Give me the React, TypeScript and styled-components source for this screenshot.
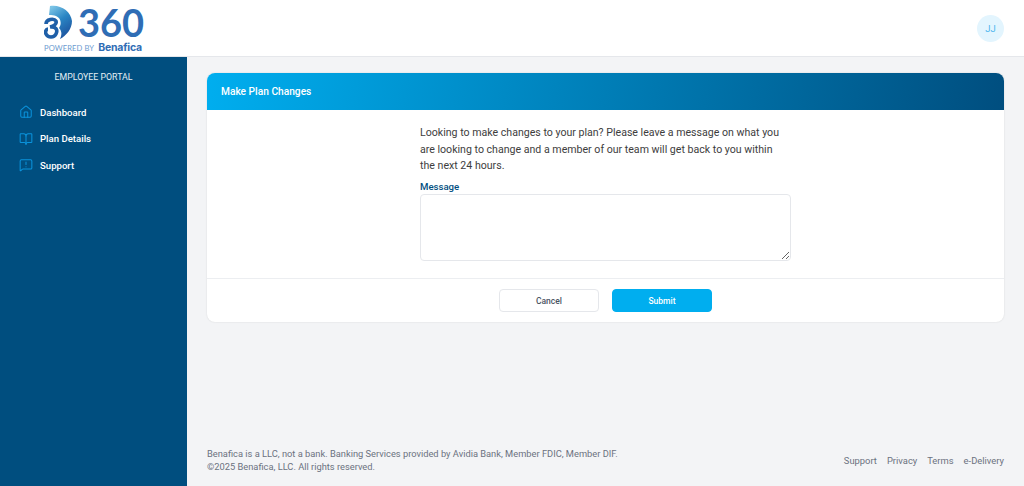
import { createGlobalStyle } from "styled-components";
import styled from "styled-components";
import { House, BookOpen, MessageSquareWarning } from "lucide-react";

const Global = createGlobalStyle`
  * { box-sizing: border-box; }
  html, body { margin: 0; height: 100%; }
  body { font-family: Roboto, "Open Sans", sans-serif; background: #f3f4f6; }
  #root { height: 100%; }
`;

const Page = styled.div`
  height: 486px;
  display: flex;
  flex-direction: column;
  overflow: hidden;
`;

const Header = styled.header`
  height: 57px;
  flex: none;
  background: #fff;
  border-bottom: 1px solid #e5e7eb;
  display: flex;
  align-items: center;
  justify-content: space-between;
  padding: 0 20px 0 44px;
`;

const Logo = styled.div`
  display: flex;
  flex-direction: column;
  height: 56px;
  padding-top: 4px;
`;

const LogoTop = styled.div`
  display: flex;
  align-items: center;
  gap: 6px;
  height: 37px;
`;

const LogoNumber = styled.span`
  font-family: Lato, sans-serif;
  font-size: 38px;
  font-weight: 700;
  line-height: 37px;
  color: #2f6db5;
`;

const LogoTag = styled.div`
  display: flex;
  align-items: baseline;
  gap: 4px;
  white-space: nowrap;
`;

const Powered = styled.span`
  font-family: Lato, sans-serif;
  font-size: 7.6px;
  letter-spacing: 0.1px;
  color: #6d9bd0;
`;

const Brand = styled.span`
  font-family: Inter, sans-serif;
  font-size: 10.5px;
  font-weight: 700;
  letter-spacing: -0.2px;
  color: #2f6db5;
`;

const Avatar = styled.div`
  width: 27px;
  height: 27px;
  border-radius: 50%;
  background: #e3f5fe;
  color: #4fb6ee;
  font-size: 9.5px;
  display: flex;
  align-items: center;
  justify-content: center;
`;

const Body = styled.div`
  flex: 1;
  display: flex;
  min-height: 0;
`;

const Sidebar = styled.aside`
  width: 187px;
  flex: none;
  background: #004e7f;
`;

const PortalTitle = styled.div`
  padding-top: 13px;
  text-align: center;
  color: #e4eef5;
  font-size: 8.8px;
  line-height: 14px;
  margin-bottom: 20px;
`;

const Nav = styled.nav`
  display: flex;
  flex-direction: column;
  gap: 10px;
  padding-left: 19px;
`;

const NavItem = styled.a`
  display: flex;
  align-items: center;
  gap: 7px;
  height: 16.5px;
  color: #fff;
  font-size: 9.6px;
  font-weight: 500;
`;

const Main = styled.main`
  flex: 1;
  display: flex;
  flex-direction: column;
  justify-content: space-between;
  padding: 16px 20px 13px;
`;

const Card = styled.section`
  background: #fff;
  border-radius: 8px;
  box-shadow: 0 0 2px rgba(0, 0, 0, 0.12);
  overflow: hidden;
`;

const CardHeader = styled.div`
  height: 37px;
  padding: 0 14px;
  display: flex;
  align-items: center;
  color: #fff;
  font-size: 10.2px;
  font-weight: 500;
  background: linear-gradient(100deg, #00aeef 0%, #004e7f 100%);
`;

const CardBody = styled.div`
  height: 169px;
  padding: 15px 0 0 213px;
  border-bottom: 1px solid #eceef1;
`;

const Intro = styled.p`
  margin: 0 0 5px;
  width: 364px;
  color: #3d3d3d;
  font-size: 10.6px;
  line-height: 16.5px;
`;

const Label = styled.label`
  display: block;
  color: #004e7f;
  font-size: 9.6px;
  font-weight: 500;
  line-height: 13px;
  margin-bottom: 1px;
`;

const Message = styled.textarea`
  display: block;
  width: 371px;
  height: 67px;
  border: 1px solid #e5e7eb;
  border-radius: 4px;
  outline: none;
  background: #fff;
`;

const CardFooter = styled.div`
  height: 43px;
  display: flex;
  justify-content: center;
  align-items: flex-start;
  gap: 13px;
  padding-top: 10px;
`;

const Button = styled.button<{ $primary?: boolean }>`
  width: 100px;
  height: 23px;
  border-radius: 4px;
  border: 1px solid ${({ $primary }) => ($primary ? "#00aeef" : "#e5e7eb")};
  background: ${({ $primary }) => ($primary ? "#00aeef" : "#fff")};
  color: ${({ $primary }) => ($primary ? "#fff" : "#4b5563")};
  font-family: inherit;
  font-size: 8.5px;
  font-weight: 500;
  padding: 0;
`;

const Footer = styled.footer`
  display: flex;
  justify-content: space-between;
  align-items: center;
  color: #6b7280;
  font-size: 9.3px;
  line-height: 13px;
`;

const FooterLinks = styled.div`
  display: flex;
  gap: 10px;
  font-size: 9.4px;
`;

const LogoMark = () => (
  <svg width="28" height="35" viewBox="0 0 28 35">
    <defs>
      <linearGradient id="markFill" x1="0.2" y1="0" x2="0.7" y2="1">
        <stop offset="0" stopColor="#7cc4e6" />
        <stop offset="0.45" stopColor="#2a86c4" />
        <stop offset="1" stopColor="#1c4f9c" />
      </linearGradient>
    </defs>
    <path
      d="M6 1 C16 -1 27 6 28 16 C28 24 22 31 16 34 C18 30 18 26 15 23 C18 19 17 13 12 11 C10 10 8 10 5 10 Z"
      fill="url(#markFill)"
    />
    <path
      d="M2 19 C2 14 10 13 12 16 C13 19 10 21 6 22 C12 21 14 25 12 29 C10 33 4 33 2 29 C1 27 2 24 4 24"
      fill="none"
      stroke="#1f5fa8"
      strokeWidth="3.6"
    />
  </svg>
);

const links = ["Support", "Privacy", "Terms", "e-Delivery"];

const navItems = [
  { label: "Dashboard", Icon: House },
  { label: "Plan Details", Icon: BookOpen },
  { label: "Support", Icon: MessageSquareWarning },
];

export default function App() {
  return (
    <Page>
      <Global />
      <Header>
        <Logo>
          <LogoTop>
            <LogoMark />
            <LogoNumber>360</LogoNumber>
          </LogoTop>
          <LogoTag>
            <Powered>POWERED BY</Powered>
            <Brand>Benafica</Brand>
          </LogoTag>
        </Logo>
        <Avatar>JJ</Avatar>
      </Header>
      <Body>
        <Sidebar>
          <PortalTitle>EMPLOYEE PORTAL</PortalTitle>
          <Nav>
            {navItems.map(({ label, Icon }) => (
              <NavItem key={label}>
                <Icon size={14} color="#0a93dc" strokeWidth={1.75} />
                {label}
              </NavItem>
            ))}
          </Nav>
        </Sidebar>
        <Main>
          <Card>
            <CardHeader>Make Plan Changes</CardHeader>
            <CardBody>
              <Intro>
                Looking to make changes to your plan? Please leave a message on what you are
                looking to change and a member of our team will get back to you within the next
                24 hours.
              </Intro>
              <Label>Message</Label>
              <Message />
            </CardBody>
            <CardFooter>
              <Button>Cancel</Button>
              <Button $primary>Submit</Button>
            </CardFooter>
          </Card>
          <Footer>
            <div>
              Benafica is a LLC, not a bank. Banking Services provided by Avidia Bank, Member FDIC, Member DIF.
              <br />
              ©2025 Benafica, LLC. All rights reserved.
            </div>
            <FooterLinks>
              {links.map((l) => (
                <span key={l}>{l}</span>
              ))}
            </FooterLinks>
          </Footer>
        </Main>
      </Body>
    </Page>
  );
}
